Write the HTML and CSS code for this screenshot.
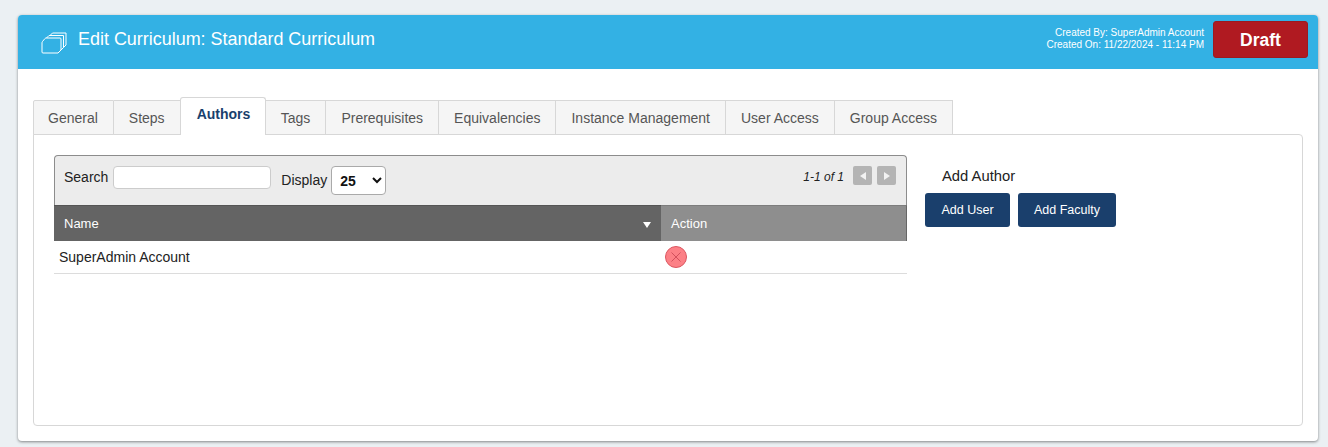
FILE: index.html
```html
<!DOCTYPE html>
<html lang="en">
<head>
<meta charset="utf-8">
<title>Edit Curriculum</title>
<link rel="stylesheet" href="styles.css">
</head>
<body>
<main class="card">
  <header class="banner">
    <svg class="banner-icon" width="26" height="22" viewBox="0 0 26 22" fill="none" stroke="#fff" stroke-width="1">
      <path d="M9.5 3 L11.5 1 H25 V13 L22.5 15.5"/>
      <path d="M5.5 6 L8 3.5 H22.5 V15.5 L20 18"/>
      <path d="M1 11 V20 Q1 21 2 21 H17 L20 18 V7 Q20 6 19 6 H5 Q4.5 6 4 6.5 L1.5 9.5 Q1 10 1 11 Z"/>
    </svg>
    <h1 class="banner-title">Edit Curriculum: Standard Curriculum</h1>
    <div class="meta">
      <div>Created By: SuperAdmin Account</div>
      <div>Created On: 11/22/2024 - 11:14 PM</div>
    </div>
    <div class="status">Draft</div>
  </header>
  <section class="content">
    <nav class="tabs">
      <a class="tab">General</a>
      <a class="tab">Steps</a>
      <a class="tab active">Authors</a>
      <a class="tab">Tags</a>
      <a class="tab">Prerequisites</a>
      <a class="tab">Equivalencies</a>
      <a class="tab">Instance Management</a>
      <a class="tab">User Access</a>
      <a class="tab">Group Access</a>
    </nav>
    <div class="panel">
      <div class="grid-wrap">
        <div class="toolbar">
          <label class="lbl lbl-search">Search</label>
          <input class="search" type="text">
          <label class="lbl lbl-display">Display</label>
          <select class="display"><option>25</option></select>
          <span class="count">1-1 of 1</span>
          <button class="pg"><span class="tri tri-l"></span></button>
          <button class="pg"><span class="tri tri-r"></span></button>
        </div>
        <div class="thead">
          <div class="th th-name">Name<span class="sort"></span></div>
          <div class="th th-action">Action</div>
        </div>
        <div class="row">
          <div class="td-name">SuperAdmin Account</div>
          <div class="td-action">
            <svg width="24" height="24" viewBox="0 0 24 24">
              <circle cx="12" cy="12" r="10.5" fill="#fc8086" stroke="#dc5660" stroke-width="1"/>
              <path d="M7.5 7.5 L16.5 16.5 M16.5 7.5 L7.5 16.5" stroke="#d2505c" stroke-width="1" fill="none"/>
            </svg>
          </div>
        </div>
      </div>
      <aside class="side">
        <div class="side-title">Add Author</div>
        <div class="side-btns">
          <button class="btn btn-user">Add User</button>
          <button class="btn btn-faculty">Add Faculty</button>
        </div>
      </aside>
    </div>
  </section>
</main>
</body>
</html>
```
FILE: styles.css
```css
* { box-sizing: border-box; }
html, body { height: 100%; }
body {
  margin: 0;
  padding: 15px 10px 0 18px;
  background: #ebf0f3;
  font-family: "Liberation Sans", Arial, sans-serif;
  overflow: hidden;
}
.card {
  height: 426px;
  background: #fff;
  border-radius: 4px;
  box-shadow: 0 1px 3px rgba(0,0,0,.45);
  display: flex;
  flex-direction: column;
}
.banner {
  height: 54px;
  background: #33b1e4;
  border-radius: 4px 4px 0 0;
  display: flex;
  align-items: center;
  padding: 0 10px 0 23px;
  color: #fff;
  flex: none;
}
.banner-icon { flex: none; margin-top: 1px; }
.banner-title {
  margin: -6px 0 0 11px;
  font-size: 17.95px;
  font-weight: 400;
  flex: 1;
}
.meta {
  font-size: 10px;
  line-height: 12px;
  text-align: right;
  margin-right: 9px;
  margin-top: -7px;
}
.status {
  width: 95px;
  height: 37px;
  padding-top: 2px;
  background: #b01a21;
  border: 1px solid #9d1a20;
  border-radius: 3px;
  font-size: 17.5px;
  font-weight: 700;
  display: flex;
  align-items: center;
  justify-content: center;
  margin-top: -5px;
}
.content {
  flex: 1;
  padding: 28px 15px 15px;
  display: flex;
  flex-direction: column;
}
.tabs {
  display: flex;
  align-items: flex-end;
  height: 38px;
  flex: none;
  position: relative;
  z-index: 1;
  margin-bottom: -1px;
}
.tab {
  height: 35px;
  padding: 0 15px;
  background: #f5f5f5;
  border: 1px solid #d7d7d7;
  border-left: 0;
  font-size: 14px;
  color: #555;
  display: flex;
  align-items: center;
}
.tab:first-child { border-left: 1px solid #d7d7d7; border-radius: 2px 0 0 0; padding: 0 15px 0 14px; }
.tab.active {
  height: 38px;
  background: #fff;
  border: 1px solid #d7d7d7;
  border-bottom: 0;
  border-radius: 3px 3px 0 0;
  color: #1a3f6c;
  font-weight: 700;
  margin-left: -1px;
  padding: 0 14.5px 5px 16px;
}
.panel {
  flex: 1;
  border: 1px solid #d7d7d7;
  border-radius: 0 4px 4px 4px;
  padding: 20px 20px 0;
  display: flex;
  align-items: flex-start;
}
.grid-wrap { width: 853px; flex: none; }
.toolbar {
  height: 50px;
  background: #ececec;
  border: 1px solid #8c8c8c;
  border-bottom: 0;
  border-radius: 4px 4px 0 0;
  display: flex;
  align-items: flex-start;
  font-size: 14px;
  color: #222;
}
.lbl { display: block; }
.lbl-search { margin: 13px 0 0 9px; }
.search {
  width: 158px;
  height: 23px;
  margin: 10px 0 0 5px;
  border: 1px solid #ccc;
  border-radius: 4px;
  background: #fff;
  padding: 0;
}
.lbl-display { margin: 16px 0 0 10px; }
.display {
  width: 55px;
  height: 29px;
  margin: 10px 0 0 4px;
  border: 1px solid #aaa;
  border-radius: 4px;
  background: #fff;
  font: 700 14px "Liberation Sans", Arial, sans-serif;
  color: #111;
  padding-left: 4px;
}
.count {
  margin: 14px 9px 0 auto;
  font-size: 12px;
  font-style: italic;
}
.pg {
  width: 19px;
  height: 19px;
  margin: 10px 5px 0 0;
  padding: 0;
  border: 0;
  border-radius: 2px;
  background: #b4b4b4;
  display: flex;
  align-items: center;
  justify-content: center;
}
.pg:last-child { margin-right: 10px; }
.tri { width: 0; height: 0; border-top: 4px solid transparent; border-bottom: 4px solid transparent; }
.tri-l { border-right: 6px solid #f2f2f2; }
.tri-r { border-left: 6px solid #f2f2f2; }
.thead { display: flex; height: 36px; }
.th {
  display: flex;
  align-items: center;
  color: #fff;
  font-size: 13px;
  padding-bottom: 1px;
}
.th-name {
  width: 607px;
  background: #646464;
  padding-left: 10px;
  padding-right: 11px;
  justify-content: space-between;
  border-top: 1px solid #555;
}
.th-action {
  flex: 1;
  background: #8e8e8e;
  padding-left: 10px;
  border-top: 1px solid #7d7d7d;
  border-right: 1px solid #666;
}
.sort {
  width: 0;
  height: 0;
  border-left: 4px solid transparent;
  border-right: 4px solid transparent;
  border-top: 6px solid #fff;
  margin: 3px -1px 0 0;
}
.row {
  display: flex;
  height: 33px;
  align-items: center;
  border-bottom: 1px solid #dcdcdc;
  font-size: 14px;
  color: #222;
}
.td-name { width: 607px; padding-left: 5px; }
.td-action { padding-left: 3px; display: flex; }
.side { margin-left: 18px; }
.side-title {
  font-size: 14.8px;
  color: #222;
  margin: 13px 0 0 17px;
  line-height: 17px;
}
.side-btns { display: flex; gap: 8px; margin-top: 8px; }
.btn {
  height: 34px;
  border: 0;
  border-radius: 3px;
  background: #1a3f6c;
  color: #fff;
  font: 12.5px "Liberation Sans", Arial, sans-serif;
  padding: 0;
}
.btn-user { width: 85px; }
.btn-faculty { width: 98px; }
```
